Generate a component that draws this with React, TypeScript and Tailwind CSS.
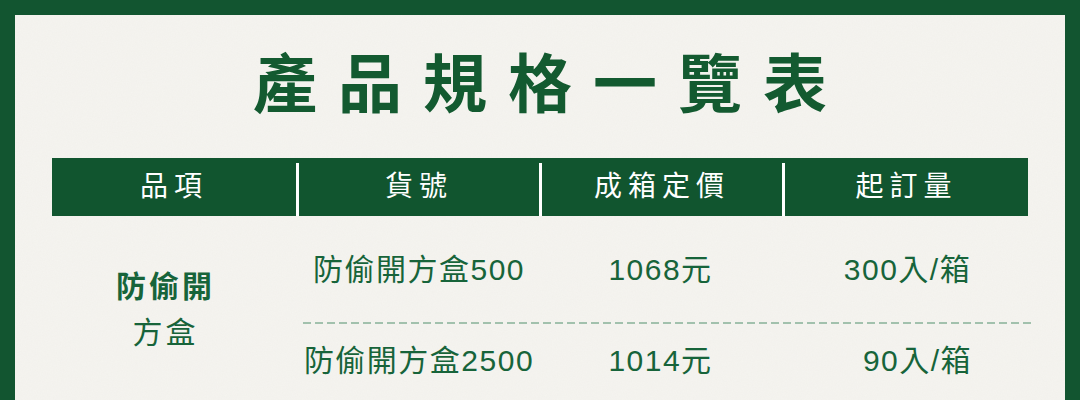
import React from "react";

// Product spec table, green frame on paper background
const FONT = "font-['Liberation_Sans','Noto_Sans_CJK_TC',sans-serif]";

const HEADERS = ["品項", "貨號", "成箱定價", "起訂量"];

function Sep() {
  return <div className="mt-[5px] self-stretch bg-white" />;
}

export default function App() {
  return (
    <div className={`${FONT} h-[400px] w-[1080px] overflow-hidden bg-[#125530] px-[15px] pt-[15px]`}>
      <div className="relative h-[420px] bg-[#f5f4f0]">
        {/* paper grain */}
        <svg className="pointer-events-none absolute inset-0 h-full w-full opacity-[0.12]">
          <filter id="grain">
            <feTurbulence type="fractalNoise" baseFrequency="0.8" numOctaves="3" stitchTiles="stitch" />
            <feColorMatrix type="matrix" values="0 0 0 0 0.55  0 0 0 0 0.5  0 0 0 0 0.4  0 0 0 0.5 0" />
          </filter>
          <rect width="100%" height="100%" filter="url(#grain)" />
        </svg>

        <div className="relative flex flex-col pt-[38px]">
          <h1 className="pl-[21px] text-center text-[64px] font-bold leading-none tracking-[21px] text-[#135a30]">
            產品規格一覽表
          </h1>

          <div className="ml-[37px] mt-[41px] w-[976px]">
            <div className="grid h-[58px] grid-cols-[244px_3px_240px_3px_240px_3px_1fr] bg-[#11552f] text-[28px] tracking-[6px] text-white">
              <div className="flex items-center justify-center">{HEADERS[0]}</div>
              <Sep />
              <div className="flex items-center justify-center">{HEADERS[1]}</div>
              <Sep />
              <div className="flex items-center justify-center">{HEADERS[2]}</div>
              <Sep />
              <div className="flex items-center justify-center">{HEADERS[3]}</div>
            </div>

            <div className="grid grid-cols-[247px_1fr] text-[#17643a]">
              <div className="flex flex-col items-center pr-[20px] pt-[48px] text-[30px] leading-[46px] tracking-[3px]">
                <span className="font-bold">防偷開</span>
                <span>方盒</span>
              </div>

              <div className="flex flex-col text-[30px] tracking-[1.5px]">
                <div className="grid h-[106px] grid-cols-[240px_243px_1fr] items-center text-center">
                  <span>防偷開方盒500</span>
                  <span>1068元</span>
                  <span>300入/箱</span>
                </div>
                <div className="ml-[4px] h-[2px] w-[730px] bg-[repeating-linear-gradient(to_right,#a2c1ad_0_8px,transparent_8px_12px)]" />
                <div className="grid h-[72px] grid-cols-[240px_243px_1fr] items-center text-center">
                  <span>防偷開方盒2500</span>
                  <span>1014元</span>
                  <span className="pl-[20px]">90入/箱</span>
                </div>
              </div>
            </div>
          </div>
        </div>
      </div>
    </div>
  );
}
